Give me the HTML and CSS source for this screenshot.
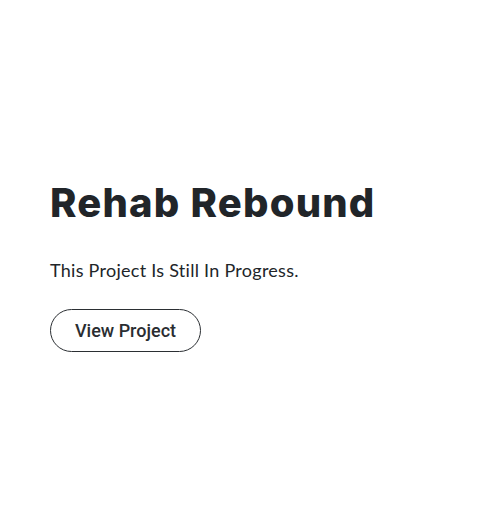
FILE: index.html
```html
<!DOCTYPE html>
<html lang="en">
<head>
<meta charset="utf-8">
<title>Rehab Rebound</title>
<link rel="stylesheet" href="styles.css">
</head>
<body>
<main class="project">
  <h1 class="project-title">Rehab Rebound</h1>
  <p class="project-status">This Project Is Still In Progress.</p>
  <a class="project-button" href="#">View Project</a>
</main>
</body>
</html>
```

FILE: styles.css
```css
html, body {
  margin: 0;
  padding: 0;
  background: #ffffff;
}
body {
  width: 496px;
  height: 524px;
  display: flex;
  flex-direction: column;
  justify-content: flex-start;
}
.project {
  display: flex;
  flex-direction: column;
  align-items: flex-start;
  padding: 178px 0 0 50px;
}
.project-title {
  margin: 0;
  font-family: "Inter", sans-serif;
  font-weight: 800;
  font-size: 40px;
  line-height: 50px;
  color: #212529;
  letter-spacing: 1.2px;
}
.project-status {
  margin: 30px 0 0 0;
  font-family: "Lato", sans-serif;
  font-weight: 400;
  font-size: 18px;
  line-height: 24px;
  color: #212529;
  letter-spacing: 0.27px;
}
.project-button {
  margin-top: 27px;
  box-sizing: border-box;
  width: 151px;
  height: 43px;
  display: flex;
  align-items: center;
  justify-content: center;
  border: 1px solid #2b2f33;
  border-radius: 22px;
  font-family: "Roboto", sans-serif;
  font-weight: 500;
  font-size: 18px;
  color: #2a2d31;
  text-decoration: none;
}
```
